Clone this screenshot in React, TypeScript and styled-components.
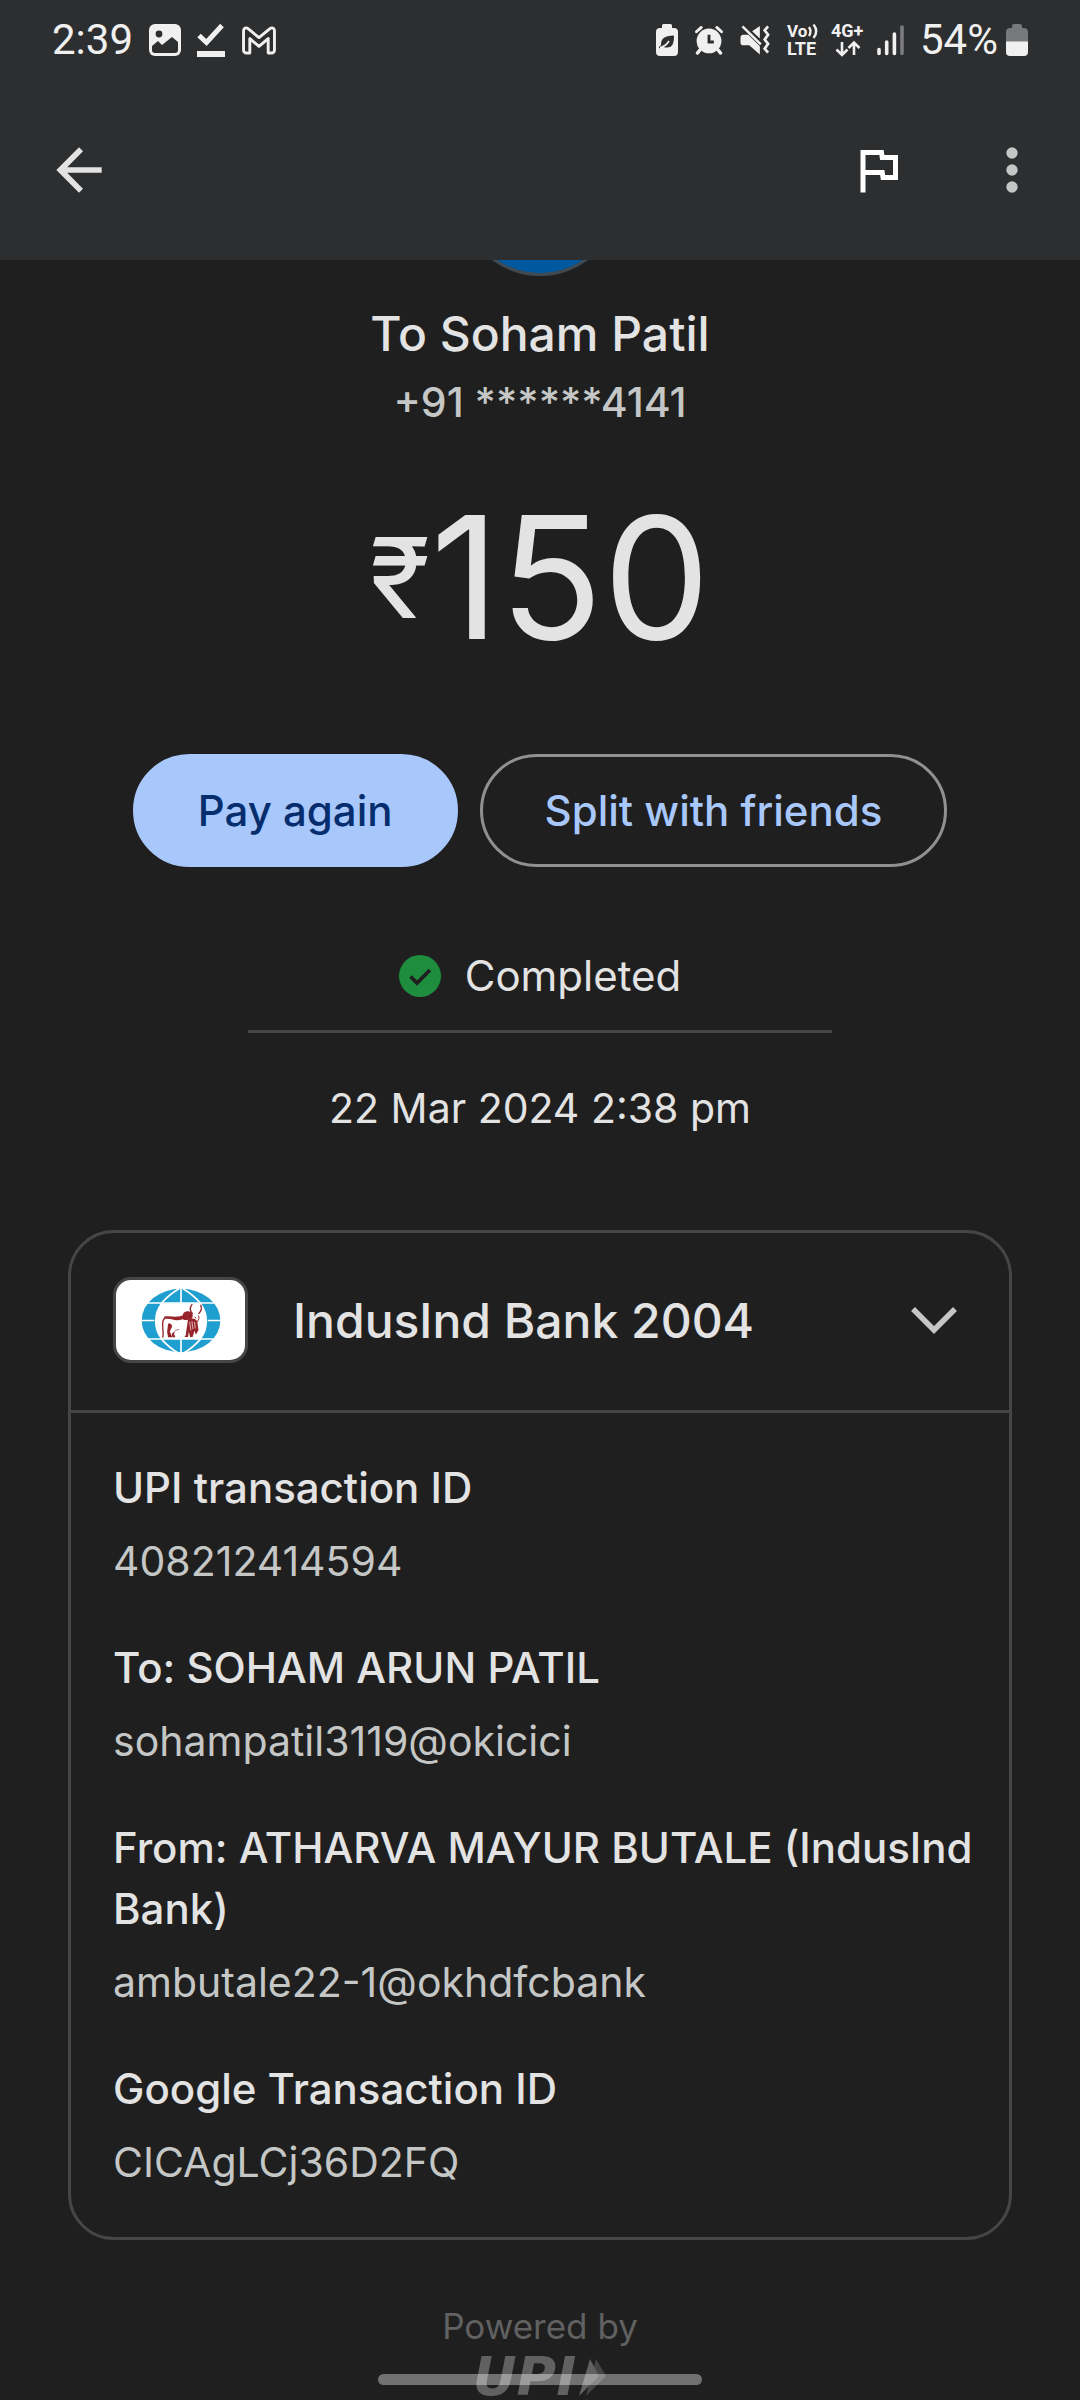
import React from "react";
import styled, { createGlobalStyle, css } from "styled-components";

const color = {
  page: "#1f1f1f",
  header: "#2d2e30",
  text: "#e3e3e3",
  muted: "#c4c7c5",
  line: "#444746",
  outline: "#8e918f",
  primary: "#a8c7fa",
  onPrimary: "#062e6f",
  success: "#1e8e3e",
  faint: "#616161",
  status: "#f0f0f0",
};

const GlobalStyle = createGlobalStyle`
  *, *::before, *::after { box-sizing: border-box; }
  body {
    margin: 0;
    background: ${color.page};
    color: ${color.text};
    font-family: Inter, Roboto, sans-serif;
  }
  h1, h2, p, dl, dt, dd { margin: 0; font-weight: inherit; }
  svg { display: block; flex: none; overflow: visible; }
`;

const Screen = styled.div`
  position: relative;
  display: flex;
  flex-direction: column;
  height: 100vh;
`;

const Header = styled.header`
  flex: none;
  background: ${color.header};
`;

const StatusBar = styled.div`
  display: flex;
  align-items: center;
  justify-content: space-between;
  height: 80px;
  padding: 0 52px;
  color: ${color.status};
  font-family: Roboto, sans-serif;
  font-size: 42px;
  line-height: 48px;
`;

const StatusGroup = styled.div<{ $gap: number }>`
  display: flex;
  align-items: center;
  gap: ${(p) => p.$gap}px;
`;

const Toolbar = styled.nav`
  display: flex;
  align-items: center;
  justify-content: space-between;
  height: 180px;
  padding: 0 34px 0 45px;
`;

const ToolbarActions = styled.div`
  display: flex;
  align-items: center;
  gap: 70px;
`;

const IconButton = styled.button<{ $tone?: string }>`
  display: flex;
  padding: 0;
  border: 0;
  background: none;
  color: ${(p) => p.$tone ?? color.text};
  cursor: pointer;
`;

const Content = styled.main`
  display: flex;
  flex: 1;
  flex-direction: column;
  align-items: center;
  min-height: 0;
  overflow-x: hidden;
  overflow-y: auto;
  scrollbar-width: none;
`;

const Avatar = styled.div`
  flex: none;
  width: 160px;
  height: 160px;
  margin-top: -144px;
  border: 3px solid #3f4a53;
  border-radius: 50%;
  background: #00589e;
`;

const Payee = styled.h1`
  margin-top: 28px;
  font-size: 48px;
  font-weight: 500;
  line-height: 60px;
`;

const Phone = styled.p`
  margin-top: 13px;
  color: ${color.muted};
  font-size: 41px;
  font-weight: 500;
  line-height: 50px;
`;

const Amount = styled.p`
  display: flex;
  margin-top: 60px;
  font-size: 170px;
  line-height: 180px;
`;

const Currency = styled.span`
  font-size: 112px;
`;

const Actions = styled.div`
  display: flex;
  flex-wrap: wrap;
  justify-content: center;
  gap: 22px;
  margin-top: 87px;
`;

const PillButton = styled.button<{ $filled?: boolean }>`
  height: 113px;
  padding: 0 62px;
  border: 3px solid ${color.outline};
  border-radius: 57px;
  background: none;
  color: ${color.primary};
  font: 500 42px Inter, sans-serif;
  cursor: pointer;
  ${(p) =>
    p.$filled &&
    css`
      border-color: ${color.primary};
      background: ${color.primary};
      color: ${color.onPrimary};
    `}
`;

const Status = styled.p`
  display: flex;
  align-items: center;
  gap: 24px;
  margin-top: 83px;
  font-size: 42px;
  line-height: 52px;
`;

const Divider = styled.hr`
  flex: none;
  width: 54%;
  height: 3px;
  margin: 28px 0 0;
  border: 0;
  background: ${color.line};
`;

const Timestamp = styled.time`
  margin-top: 49px;
  font-size: 41px;
  line-height: 52px;
`;

const Card = styled.section`
  flex: none;
  align-self: stretch;
  margin: 96px 68px 0;
  border: 3px solid ${color.line};
  border-radius: 46px;
`;

const CardHeader = styled.button`
  display: flex;
  align-items: center;
  width: 100%;
  height: 180px;
  padding: 0 52px 3px 42px;
  border: 0;
  border-bottom: 3px solid ${color.line};
  background: none;
  color: ${color.text};
  font: 500 48px Inter, sans-serif;
  text-align: left;
  cursor: pointer;
`;

const BankLogo = styled.span`
  display: flex;
  flex: none;
  align-items: center;
  justify-content: center;
  width: 135px;
  height: 86px;
  margin-right: 45px;
  border: 3px solid ${color.line};
  border-radius: 18px;
  background: #fff;
`;

const BankName = styled.span`
  flex: 1;
`;

const Details = styled.dl`
  display: flex;
  flex-direction: column;
  gap: 45px;
  padding: 44px 30px 44px 42px;
`;

const Detail = styled.div`
  display: flex;
  flex-direction: column;
  gap: 13px;
  line-height: 61px;
`;

const DetailLabel = styled.dt`
  font-size: 42px;
  font-weight: 500;
`;

const DetailValue = styled.dd`
  color: ${color.muted};
  font-size: 41px;
`;

const Footer = styled.footer`
  display: flex;
  flex: none;
  flex-direction: column;
  align-items: center;
  margin-top: 64px;
  color: ${color.faint};
  font-size: 35px;
  line-height: 44px;
`;

const UpiLogo = styled.div`
  display: flex;
  align-items: center;
  gap: 3px;
  height: 38px;
  margin-top: 8px;
  padding-top: 3px;
  font: italic 700 54px "DejaVu Sans", sans-serif;
  line-height: 38px;
`;

const UpiTagline = styled.small`
  margin-top: 4px;
  font-size: 9px;
  line-height: 12px;
`;

const HomeIndicator = styled.div`
  position: absolute;
  bottom: 15px;
  left: 35%;
  width: 30%;
  height: 11px;
  border-radius: 6px;
  background: rgba(255, 255, 255, 0.37);
`;

const GalleryIcon = () => (
  <svg width="32" height="32" viewBox="0 0 32 32">
    <rect width="32" height="32" rx="6" fill="currentColor" />
    <circle cx="10" cy="10" r="3.4" fill={color.header} />
    <path d="M3 22l6-5 4 4 10-8 6 5v8a3 3 0 0 1-3 3H6a3 3 0 0 1-3-3z" fill={color.header} />
  </svg>
);

const DoneIcon = () => (
  <svg width="28" height="34" viewBox="0 0 28 34" fill="none" stroke="currentColor">
    <path d="M2 12.500l7.500 7L25 2.500" strokeWidth="5" />
    <path d="M0 31h28" strokeWidth="6" />
  </svg>
);

const MailIcon = () => (
  <svg width="36" height="29" viewBox="0 0 36 30" fill="none" stroke="currentColor" strokeWidth="3" strokeLinejoin="round">
    <path d="M2 5C2 2 4.500 1 7 3l11 9L29 3c2.500-2 5-1 5 2v20a3 3 0 0 1-3 3h-3.500V13L18 21 8.500 13v15H5a3 3 0 0 1-3-3z" />
  </svg>
);

const PowerSaveIcon = () => (
  <svg width="22" height="32" viewBox="0 0 22 32">
    <path d="M6 1.500A1.500 1.500 0 0 1 7.500 0h7A1.500 1.500 0 0 1 16 1.500V4h2a4 4 0 0 1 4 4v20a4 4 0 0 1-4 4H4a4 4 0 0 1-4-4V8a4 4 0 0 1 4-4h2z" fill="currentColor" />
    <path d="M18 11.500c0 9-2 12-7 12-2 0-4-.5-4.500-1L3 24.500V23l2-2c0-6 3-9.500 13-9.500z" fill={color.header} />
    <path d="M4 23.500c5-1 7-3 9-6.500" fill="none" stroke="currentColor" strokeWidth="1.600" />
  </svg>
);

const AlarmIcon = () => (
  <svg width="30" height="30" viewBox="0 0 30 31" fill="none" stroke="currentColor" strokeLinecap="round">
    <circle cx="15" cy="16.500" r="12.800" fill="currentColor" stroke="none" />
    <path d="M2 7l5-4.500M28 7l-5-4.500" strokeWidth="3" />
    <path d="M5.500 26l-2.500 3M24.500 26l2.500 3" strokeWidth="3.500" />
    <path d="M15 10v7.500h5" stroke={color.header} strokeWidth="3" strokeLinecap="butt" />
  </svg>
);

const MuteIcon = () => (
  <svg width="31" height="30" viewBox="0 0 31 31" fill="currentColor">
    <path d="M0 13a3 3 0 0 1 3-3h5l12 12v8.500L9 21H3a3 3 0 0 1-3-3zM12 6.500L20 1v13z" />
    <path d="M2 1.500L21 20" stroke="currentColor" strokeWidth="2.600" />
    <path d="M28.500 1.500l-3.500 4 3.500 4.500-3.500 5 3.500 4.500-3.500 5 3.500 4" fill="none" stroke="currentColor" strokeWidth="2.800" />
  </svg>
);

const VolteIcon = () => (
  <svg width="32" height="34" viewBox="0 0 32 34" fill="currentColor" fontFamily="Roboto, sans-serif" fontWeight="700">
    <text x="0" y="14" fontSize="17">Vo</text>
    <text x="0" y="32" fontSize="18">LTE</text>
    <path d="M22 4q3 4.500 0 9M26.500 1.500q5.500 7 0 13.500" fill="none" stroke="currentColor" strokeWidth="2.400" />
  </svg>
);

const MobileDataIcon = () => (
  <svg width="34" height="34" viewBox="0 0 34 34" fill="currentColor" fontFamily="Roboto, sans-serif" fontWeight="700">
    <text x="0" y="14" fontSize="18">4G+</text>
    <path d="M11 19v12M5.500 26.500L11 32l5.500-5.500M23 32V20M17.500 25l5.500-5.500L28.500 25" fill="none" stroke="currentColor" strokeWidth="2.600" />
  </svg>
);

const SignalIcon = () => (
  <svg width="27" height="30" viewBox="0 0 27 30" stroke="currentColor" strokeWidth="3.600" strokeLinecap="round">
    <path d="M2 24.500v4M9.700 17v11.500M17.400 9v19.500" />
    <path d="M25 2v26.500" stroke="#7b7c7d" />
  </svg>
);

const BatteryIcon = () => (
  <svg width="22" height="32" viewBox="0 0 22 32">
    <path d="M6 2a2 2 0 0 1 2-2h6a2 2 0 0 1 2 2v2h2a4 4 0 0 1 4 4v10H0V8a4 4 0 0 1 4-4h2z" fill="#77787a" />
    <path d="M0 17.500h22V28a4 4 0 0 1-4 4H4a4 4 0 0 1-4-4z" fill="currentColor" />
  </svg>
);

const BackIcon = () => (
  <svg width="68" height="68" viewBox="0 0 24 24" fill="currentColor">
    <path d="M20 11H7.830l5.590-5.590L12 4l-8 8 8 8 1.410-1.410L7.830 13H20z" />
  </svg>
);

const FlagIcon = () => (
  <svg width="60" height="60" viewBox="0 0 24 24" fill="none" stroke="currentColor" strokeWidth="2">
    <path d="M6 21V5h7.400l.3 2H19v8h-5l-.3-2H6" />
  </svg>
);

const MoreIcon = () => (
  <svg width="68" height="68" viewBox="0 0 24 24" fill="currentColor">
    <circle cx="12" cy="6" r="2" />
    <circle cx="12" cy="12" r="2" />
    <circle cx="12" cy="18" r="2" />
  </svg>
);

const CheckCircleIcon = () => (
  <svg width="42" height="42" viewBox="0 0 42 42">
    <circle cx="21" cy="21" r="21" fill={color.success} />
    <path d="M11.500 21.500l6.500 6.500L31 15" fill="none" stroke={color.page} strokeWidth="3.800" />
  </svg>
);

const ChevronIcon = () => (
  <svg width="46" height="28" viewBox="0 0 46 28" fill="none" stroke={color.muted} strokeWidth="5.500">
    <path d="M2 3l21 21L44 3" />
  </svg>
);

/* Globe with a standing bull */
const BankEmblem = () => (
  <svg width="80" height="65" viewBox="84 36 242 196">
    <ellipse cx="205" cy="134" rx="119" ry="96" fill="#1f9fcf" />
    <path d="M144 82a90 90 0 0 0 0 108h122a90 90 0 0 0 0-108z" fill="#fff" />
    <g fill="none" stroke="#fff" strokeWidth="5">
      <path d="M84 81h242M84 190h242M84 134h40M286 134h40M205 36v46M205 190v44" />
      <path d="M144 84q24-28 55-46M266 84q-24-28-55-46M144 188q24 28 55 46M266 188q-24 28-55 46" />
    </g>
    <g fill="none" stroke="#97242a" strokeWidth="4" strokeLinecap="round" strokeLinejoin="round">
      <path d="M150 184c4-16-4-34 1-50 3-9 12-10 24-7" />
      <path d="M239 112c-8-8-7-18-1-26M259 113c8-8 9-17 6-25" />
      <path d="M258 120c4 4 0 12-3 18M247 124l3 2" strokeWidth="3" />
      <path d="M188 164l10-3" strokeWidth="2" />
    </g>
    <g fill="#97242a">
      <path d="M154 123c16-5 34 4 56-4 2-14 18-16 28-8 4 7 3 12 0 17-12 6-20 6-28 2-22 8-34-3-56-2z" />
      <path d="M166 144c8-3 12 2 12 9l-7 14 8 18h-13l-3-16z" />
      <path d="M187 166l-3 9 4 10h-9l-2-11zM226 132c10-5 22-7 28 5l4 26-8 14-4-12-6 19h-8l-3-16-3 16h-11l4-5z" />
    </g>
    <path d="M231 138l4 26M238 136l3 24M246 138l2 20" stroke="#fff" strokeWidth="2" />
  </svg>
);

const UpiArrows = () => (
  <svg width="28" height="38" viewBox="0 0 28 38">
    <path d="M17 1l10 17L7 38z" fill="#454545" />
    <path d="M11 1l9 17L0 38z" fill={color.faint} />
  </svg>
);

const details = [
  { label: "UPI transaction ID", value: "408212414594" },
  { label: "To: SOHAM ARUN PATIL", value: "sohampatil3119@okicici" },
  { label: "From: ATHARVA MAYUR BUTALE (IndusInd Bank)", value: "ambutale22-1@okhdfcbank" },
  { label: "Google Transaction ID", value: "CICAgLCj36D2FQ" },
];

export default function App() {
  return (
    <>
      <GlobalStyle />
      <Screen>
        <Header>
          <StatusBar>
            <StatusGroup $gap={16}>
              <span>2:39</span>
              <GalleryIcon />
              <DoneIcon />
              <MailIcon />
            </StatusGroup>
            <StatusGroup $gap={16}>
              <StatusGroup $gap={16}>
                <PowerSaveIcon />
                <AlarmIcon />
                <MuteIcon />
              </StatusGroup>
              <StatusGroup $gap={12}>
                <VolteIcon />
                <MobileDataIcon />
                <SignalIcon />
              </StatusGroup>
              <StatusGroup $gap={8}>
                <span>54%</span>
                <BatteryIcon />
              </StatusGroup>
            </StatusGroup>
          </StatusBar>
          <Toolbar>
            <IconButton aria-label="Back">
              <BackIcon />
            </IconButton>
            <ToolbarActions>
              <IconButton aria-label="Report" $tone="#fff">
                <FlagIcon />
              </IconButton>
              <IconButton aria-label="More options" $tone={color.muted}>
                <MoreIcon />
              </IconButton>
            </ToolbarActions>
          </Toolbar>
        </Header>

        <Content>
          <Avatar />
          <Payee>To Soham Patil</Payee>
          <Phone>+91 ******4141</Phone>
          <Amount>
            <Currency>₹</Currency>150
          </Amount>
          <Actions>
            <PillButton $filled>Pay again</PillButton>
            <PillButton>Split with friends</PillButton>
          </Actions>
          <Status>
            <CheckCircleIcon />
            Completed
          </Status>
          <Divider />
          <Timestamp dateTime="2024-03-22T14:38">22 Mar 2024 2:38 pm</Timestamp>

          <Card>
            <CardHeader aria-expanded="true">
              <BankLogo>
                <BankEmblem />
              </BankLogo>
              <BankName>IndusInd Bank 2004</BankName>
              <ChevronIcon />
            </CardHeader>
            <Details>
              {details.map((d) => (
                <Detail key={d.label}>
                  <DetailLabel>{d.label}</DetailLabel>
                  <DetailValue>{d.value}</DetailValue>
                </Detail>
              ))}
            </Details>
          </Card>

          <Footer>
            <span>Powered by</span>
            <UpiLogo>
              UPI
              <UpiArrows />
            </UpiLogo>
            <UpiTagline>UNIFIED PAYMENTS INTERFACE</UpiTagline>
          </Footer>
        </Content>
        <HomeIndicator />
      </Screen>
    </>
  );
}
